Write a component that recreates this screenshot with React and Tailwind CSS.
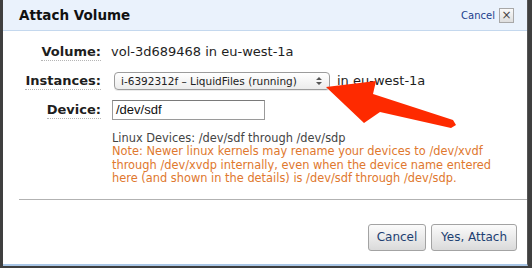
import React from "react";

const sans = { fontFamily: '"DejaVu Sans", Verdana, sans-serif' };

function Label({ children }) {
  return (
    <div className="flex justify-end">
      <span className="text-[13px] font-bold text-[#1e1e1e] border-b border-dotted border-[#b5b5b5] leading-[17px]">
        {children}
      </span>
    </div>
  );
}

function SelectBox() {
  return (
    <div className="flex items-center justify-between w-[216px] h-[18px] ml-[3px] pl-[6px] pr-[7px] rounded-[4px] border border-[#9c9c9c] bg-gradient-to-b from-white to-[#ececec] shadow-[0_1px_0_rgba(0,0,0,0.08)]">
      <span className="text-[10.5px] text-[#222] leading-none">i-6392312f – LiquidFiles (running)</span>
      <svg width="6" height="10" viewBox="0 0 6 10" className="text-[#555]">
        <path d="M0 4 L3 1 L6 4 Z M0 6 L3 9 L6 6 Z" fill="currentColor" />
      </svg>
    </div>
  );
}

export default function App() {
  return (
    <div className="relative w-[532px] h-[268px] overflow-hidden bg-[#3f3f3f]" style={sans}>
      <div className="flex flex-col ml-[3px] w-[525px] h-[266px] bg-white border-r border-[#555] border-b-2 border-b-[#a9c6e6]">
        {/* Header */}
        <div className="flex items-center justify-between h-[31px] pl-[16px] pr-[13px] bg-[#eaf2fc] border-b border-[#c4d8ee]">
          <h3 className="text-[13.5px] font-bold text-[#111]">Attach Volume</h3>
          <div className="flex items-center gap-[4px]">
            <span className="text-[10px] text-[#1c3f8c]">Cancel</span>
            <span className="flex items-center justify-center w-[15px] h-[15px] border border-[#a8a8a8] bg-gradient-to-b from-[#fafafa] to-[#dedede] text-[12px] leading-none text-[#444]">
              ×
            </span>
          </div>
        </div>

        {/* Body */}
        <div className="grid grid-cols-[98px_1fr] gap-x-[10px] gap-y-[5px] pt-[9px] items-center auto-rows-[24px]">
          <Label>Volume:</Label>
          <div className="text-[13px] text-[#1e1e1e]">vol-3d689468 in eu-west-1a</div>

          <Label>Instances:</Label>
          <div className="flex items-center gap-[7px] text-[13px] text-[#1e1e1e]">
            <SelectBox />
            <span>in eu-west-1a</span>
          </div>

          <Label>Device:</Label>
          <div className="flex items-center">
            <div
              className="ml-[1px] w-[153px] h-[20px] flex items-center pl-[3px] border border-[#9a9a9a] border-t-[#7a7a7a] text-[13px] text-[#111]"
              style={{ fontFamily: '"Liberation Sans", Arial, sans-serif' }}
            >
              /dev/sdf
            </div>
          </div>
        </div>

        <div className="ml-[109px] mt-[10px] text-[11.4px] leading-[13.4px] whitespace-nowrap">
          <div className="text-[#444]">Linux Devices: /dev/sdf through /dev/sdp</div>
          <div className="text-[#e0782e]">
            Note: Newer linux kernels may rename your devices to /dev/xvdf
            <br />
            through /dev/xvdp internally, even when the device name entered
            <br />
            here (and shown in the details) is /dev/sdf through /dev/sdp.
          </div>
        </div>

        <div className="ml-[16px] mt-[13px] border-t border-[#b2b2b2]" />

        <div className="flex justify-end gap-[5px] pr-[10px] mt-[24px]">
          <button className="w-[58px] h-[27px] rounded-[3px] border border-[#a3a3a3] bg-gradient-to-b from-[#fbfbfb] to-[#dadada] text-[12px] text-[#1d3f72]">
            Cancel
          </button>
          <button className="w-[86px] h-[27px] rounded-[3px] border border-[#a3a3a3] bg-gradient-to-b from-[#fbfbfb] to-[#dadada] text-[12px] text-[#1d3f72]">
            Yes, Attach
          </button>
        </div>
      </div>

      {/* Red annotation arrow */}
      <svg className="absolute left-0 top-0 pointer-events-none" width="532" height="268">
        <polygon
          points="326,87 376,81 373,94 453,120 456,125 451,128 380,112 364,123"
          fill="#fe2a00"
        />
      </svg>
    </div>
  );
}
